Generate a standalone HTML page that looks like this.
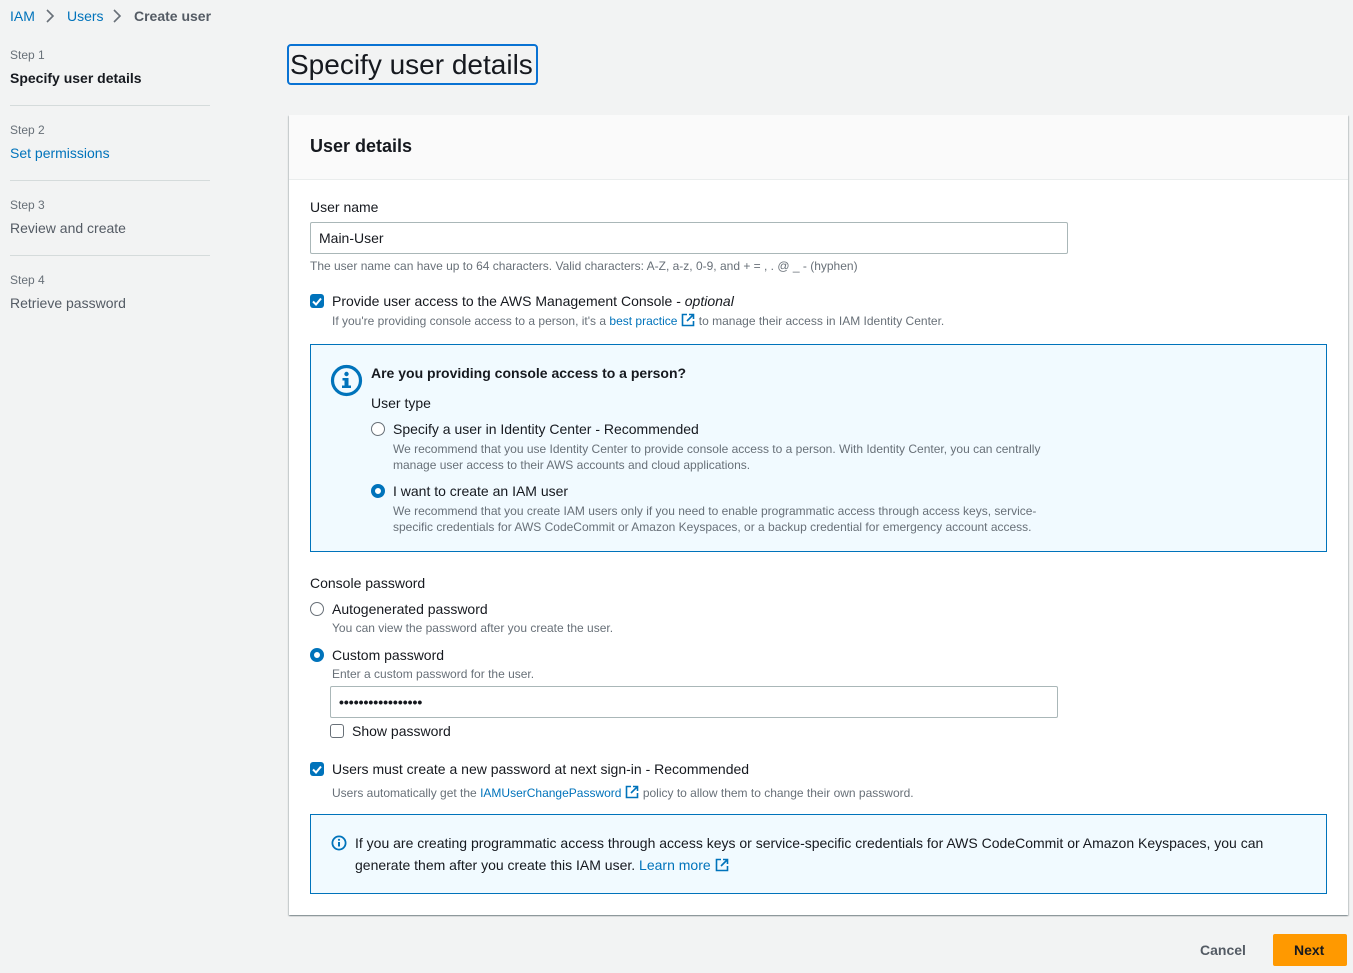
<!DOCTYPE html>
<html><head><meta charset="utf-8"><style>
*{box-sizing:border-box;margin:0;padding:0}
body{width:1353px;height:973px;background:#f2f3f3;font-family:"Liberation Sans",sans-serif;color:#16191f;position:relative;overflow:hidden}
.t{position:absolute;white-space:nowrap;line-height:16px}
.s{font-size:14px}
.x{font-size:12px;color:#687078;line-height:14px}
.b{color:#0073bb}
.g{color:#545b64}
.cb{position:absolute;width:14px;height:14px;border-radius:3px;background:#0073bb}
.cb svg{position:absolute;left:0;top:0}
.cbe{position:absolute;width:14px;height:14px;border-radius:3px;border:1.5px solid #687078;background:#fff}
.r{position:absolute;width:14px;height:14px;border-radius:50%;border:1.5px solid #687078;background:#fff}
.ro{position:absolute;width:14px;height:14px;border-radius:50%;border:4px solid #0073bb;background:#fff}
.ext{display:inline-block;vertical-align:-2px;margin-left:4px}
.line{position:absolute;left:10px;width:200px;height:1px;background:#d5dbdb}
</style></head><body>
<div class="t s b" style="left:10px;top:8px">IAM</div>
<svg style="position:absolute;left:45px;top:9px" width="10" height="14"><path d="M2 1l6 6-6 6" fill="none" stroke="#687078" stroke-width="1.6"/></svg>
<div class="t s b" style="left:67px;top:8px">Users</div>
<svg style="position:absolute;left:112px;top:9px" width="10" height="14"><path d="M2 1l6 6-6 6" fill="none" stroke="#687078" stroke-width="1.6"/></svg>
<div class="t s g" style="left:134px;top:8px;font-weight:bold">Create user</div>

<div class="t" style="left:10px;top:47px;font-size:12px;color:#687078">Step 1</div>
<div class="t s" style="left:10px;top:70px;font-weight:bold">Specify user details</div>
<div class="line" style="top:105px"></div>
<div class="t" style="left:10px;top:122px;font-size:12px;color:#687078">Step 2</div>
<div class="t s b" style="left:10px;top:145px">Set permissions</div>
<div class="line" style="top:180px"></div>
<div class="t" style="left:10px;top:197px;font-size:12px;color:#687078">Step 3</div>
<div class="t s g" style="left:10px;top:220px">Review and create</div>
<div class="line" style="top:255px"></div>
<div class="t" style="left:10px;top:272px;font-size:12px;color:#687078">Step 4</div>
<div class="t s g" style="left:10px;top:295px">Retrieve password</div>

<div style="position:absolute;left:287px;top:44px;width:251px;height:41px;border:2px solid #0972d3;border-radius:4px"></div>
<div class="t" style="left:290px;top:47px;font-size:28px;line-height:36px;color:#16191f">Specify user details</div>

<div style="position:absolute;left:289px;top:115px;width:1059px;height:800px;background:#fff;box-shadow:0 1px 1px rgba(0,28,36,.3),1px 1px 1px rgba(0,28,36,.15),-1px 1px 1px rgba(0,28,36,.15)"></div>
<div style="position:absolute;left:289px;top:115px;width:1059px;height:65px;background:#fafafa;border-bottom:1px solid #eaeded"></div>
<div class="t" style="left:310px;top:136px;font-size:18px;line-height:20px;font-weight:bold">User details</div>

<div class="t s" style="left:310px;top:199px">User name</div>
<div style="position:absolute;left:310px;top:222px;width:758px;height:32px;border:1px solid #aab7b8;border-radius:2px;background:#fff"></div>
<div class="t s" style="left:319px;top:230px">Main-User</div>
<div class="t x" style="left:310px;top:259px">The user name can have up to 64 characters. Valid characters: A-Z, a-z, 0-9, and + = , . @ _ - (hyphen)</div>

<div class="cb" style="left:310px;top:294px"><svg width="14" height="14"><path d="M3 7.5l3 3 5-6" fill="none" stroke="#fff" stroke-width="2"/></svg></div>
<div class="t s" style="left:332px;top:293px">Provide user access to the AWS Management Console - <i>optional</i></div>
<div class="t x" style="left:332px;top:313px">If you're providing console access to a person, it's a <span class="b">best practice</span><svg class="ext" width="14" height="14"><path d="M6 1.5H1.5v11h11V8M8 1.5h4.5V6M12.5 1.5L6 8" fill="none" stroke="#0073bb" stroke-width="1.6"/></svg> to manage their access in IAM Identity Center.</div>

<div style="position:absolute;left:310px;top:344px;width:1017px;height:208px;background:#f1faff;border:1px solid #0073bb"></div>
<svg style="position:absolute;left:330px;top:364px" width="33" height="33"><circle cx="16.5" cy="16.5" r="14" fill="none" stroke="#0073bb" stroke-width="3.2"/><rect x="14.5" y="14" width="4" height="9" fill="#0073bb"/><rect x="12.5" y="14" width="5" height="2.5" fill="#0073bb"/><rect x="12" y="21.5" width="9" height="2.5" fill="#0073bb"/><circle cx="16.5" cy="10" r="2.2" fill="#0073bb"/></svg>
<div class="t s" style="left:371px;top:365px;font-weight:bold">Are you providing console access to a person?</div>
<div class="t s" style="left:371px;top:395px">User type</div>
<div class="r" style="left:371px;top:422px"></div>
<div class="t s" style="left:393px;top:421px">Specify a user in Identity Center - Recommended</div>
<div class="t x" style="left:393px;top:441px;line-height:16px">We recommend that you use Identity Center to provide console access to a person. With Identity Center, you can centrally<br>manage user access to their AWS accounts and cloud applications.</div>
<div class="ro" style="left:371px;top:484px"></div>
<div class="t s" style="left:393px;top:483px">I want to create an IAM user</div>
<div class="t x" style="left:393px;top:503px;line-height:16px">We recommend that you create IAM users only if you need to enable programmatic access through access keys, service-<br>specific credentials for AWS CodeCommit or Amazon Keyspaces, or a backup credential for emergency account access.</div>

<div class="t s" style="left:310px;top:575px">Console password</div>
<div class="r" style="left:310px;top:602px"></div>
<div class="t s" style="left:332px;top:601px">Autogenerated password</div>
<div class="t x" style="left:332px;top:621px">You can view the password after you create the user.</div>
<div class="ro" style="left:310px;top:648px"></div>
<div class="t s" style="left:332px;top:647px">Custom password</div>
<div class="t x" style="left:332px;top:667px">Enter a custom password for the user.</div>
<div style="position:absolute;left:330px;top:686px;width:728px;height:32px;border:1px solid #aab7b8;border-radius:2px;background:#fff"></div>
<div class="t" style="left:339px;top:694px;font-size:14px;font-weight:bold">•••••••••••••••••</div>
<div class="cbe" style="left:330px;top:724px"></div>
<div class="t s" style="left:352px;top:723px">Show password</div>

<div class="cb" style="left:310px;top:762px"><svg width="14" height="14"><path d="M3 7.5l3 3 5-6" fill="none" stroke="#fff" stroke-width="2"/></svg></div>
<div class="t s" style="left:332px;top:761px">Users must create a new password at next sign-in - Recommended</div>
<div class="t x" style="left:332px;top:785px">Users automatically get the <span class="b">IAMUserChangePassword</span><svg class="ext" width="14" height="14"><path d="M6 1.5H1.5v11h11V8M8 1.5h4.5V6M12.5 1.5L6 8" fill="none" stroke="#0073bb" stroke-width="1.6"/></svg> policy to allow them to change their own password.</div>

<div style="position:absolute;left:310px;top:814px;width:1017px;height:80px;background:#f1faff;border:1px solid #0073bb"></div>
<svg style="position:absolute;left:331px;top:835px" width="16" height="16"><circle cx="8" cy="8" r="6.6" fill="none" stroke="#0073bb" stroke-width="1.8"/><rect x="7" y="7" width="2" height="4.5" fill="#0073bb"/><circle cx="8" cy="4.8" r="1.1" fill="#0073bb"/></svg>
<div class="t s" style="left:355px;top:832px;line-height:22px">If you are creating programmatic access through access keys or service-specific credentials for AWS CodeCommit or Amazon Keyspaces, you can<br>generate them after you create this IAM user. <span class="b">Learn more</span><svg class="ext" width="14" height="14"><path d="M6 1.5H1.5v11h11V8M8 1.5h4.5V6M12.5 1.5L6 8" fill="none" stroke="#0073bb" stroke-width="1.6"/></svg></div>

<div class="t s g" style="left:1200px;top:942px;font-weight:bold">Cancel</div>
<div style="position:absolute;left:1273px;top:934px;width:74px;height:32px;background:#ff9900;border-radius:2px"></div>
<div class="t s" style="left:1294px;top:942px;font-weight:bold">Next</div>
</body></html>
